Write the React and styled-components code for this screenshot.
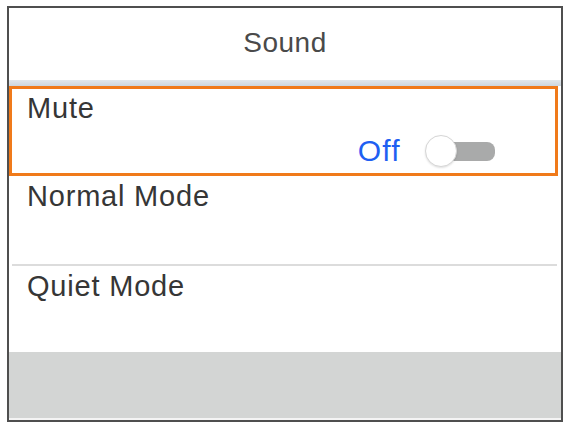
import React from "react";
import styled, { createGlobalStyle } from "styled-components";

const Global = createGlobalStyle`
  html, body { margin: 0; padding: 0; background: #fff; }
  body { font-family: "Liberation Sans", Arial, sans-serif; }
`;

const Frame = styled.div`
  box-sizing: border-box;
  margin: 6px 0 0 7px;
  width: 556px;
  height: 416px;
  border: 2px solid #4f4f4f;
  display: flex;
  flex-direction: column;
  background: #fff;
`;

const Header = styled.div`
  height: 72px;
  display: flex;
  align-items: center;
  justify-content: center;
  font-size: 28px;
  letter-spacing: 0.5px;
  color: #4a4a4a;
  padding-bottom: 2px;
  box-sizing: border-box;
`;

const Divider = styled.div`
  height: 6px;
  background: linear-gradient(#e3e8ec, #cdd6de);
`;

const Row = styled.div`
  box-sizing: border-box;
  height: ${(p) => p.$h}px;
  padding: ${(p) => (p.$selected ? 2 : 0)}px 0 0 15px;
  display: flex;
  flex-direction: column;
  border: 3px solid ${(p) => (p.$selected ? "#f07a1a" : "transparent")};
  margin-right: ${(p) => (p.$selected ? 3 : 0)}px;
`;

const Label = styled.div`
  font-size: 29px;
  letter-spacing: 0.8px;
  color: #363636;
  line-height: 34px;
`;

const ValueLine = styled.div`
  display: flex;
  align-items: center;
  justify-content: flex-end;
  gap: 24px;
  padding-right: 58px;
  margin-top: 10px;
`;

const Value = styled.span`
  font-size: 30px;
  letter-spacing: 1.3px;
  color: #1f5ff2;
  line-height: 32px;
`;

const Toggle = styled.div`
  position: relative;
  width: 72px;
  height: 32px;
  display: flex;
  align-items: center;
`;

const Track = styled.div`
  margin-left: 20px;
  width: 50px;
  height: 19px;
  border-radius: 0 8px 8px 0;
  background: #a9aaaa;
`;

const Knob = styled.div`
  position: absolute;
  left: 0;
  top: 0;
  width: 32px;
  height: 32px;
  box-sizing: border-box;
  border-radius: 50%;
  background: #fff;
  border: 1.5px solid #d6d6d6;
  box-shadow: 0 1px 2px rgba(0, 0, 0, 0.12);
`;

const Separator = styled.div`
  height: 2px;
  margin: 0 4px 0 3px;
  background: #dcdcdc;
`;

const Footer = styled.div`
  flex: 1;
  background: #d3d5d4;
  border-bottom: 2px solid #f4f4f4;
`;

export default function App() {
  return (
    <>
      <Global />
      <Frame>
        <Header>Sound</Header>
        <Divider />
        <Row $h={90} $selected>
          <Label>Mute</Label>
          <ValueLine>
            <Value>Off</Value>
            <Toggle>
              <Track />
              <Knob />
            </Toggle>
          </ValueLine>
        </Row>
        <Row $h={88}>
          <Label>Normal Mode</Label>
        </Row>
        <Separator />
        <Row $h={86}>
          <Label>Quiet Mode</Label>
        </Row>
        <Footer />
      </Frame>
    </>
  );
}
